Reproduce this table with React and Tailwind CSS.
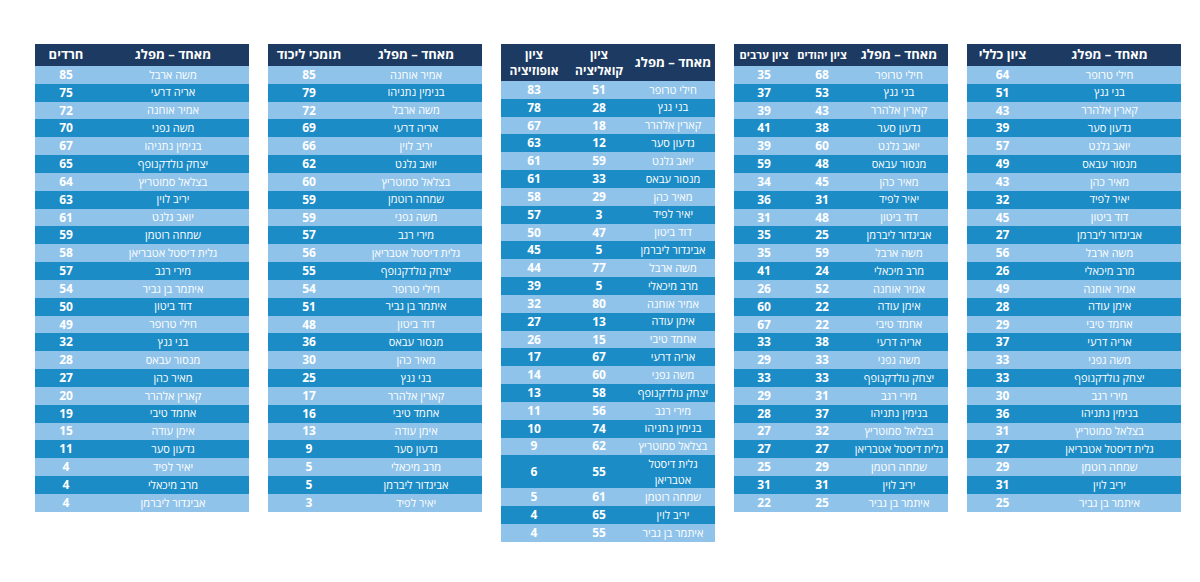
import React from 'react';

const NAME = 'מאחד – מפלג';

const tables = [
  {
    head: 'h-[22px]',
    cols: [
      { label: NAME, w: 'w-[143px]' },
      { label: 'ציון כללי', w: 'w-[71px]' },
    ],
    rows: [
      ['חילי טרופר', 64], ['בני גנץ', 51], ['קארין אלהרר', 43], ['גדעון סער', 39],
      ['יואב גלנט', 57], ['מנסור עבאס', 49], ['מאיר כהן', 43], ['יאיר לפיד', 32],
      ['דוד ביטון', 45], ['אביגדור ליברמן', 27], ['משה ארבל', 56], ['מרב מיכאלי', 26],
      ['אמיר אוחנה', 49], ['אימן עודה', 28], ['אחמד טיבי', 29], ['אריה דרעי', 37],
      ['משה גפני', 33], ['יצחק גולדקנופף', 33], ['מירי רגב', 30], ['בנימין נתניהו', 36],
      ['בצלאל סמוטריץ', 31], ['גלית דיסטל אטבריאן', 27], ['שמחה רוטמן', 29], ['יריב לוין', 31],
      ['איתמר בן גביר', 25],
    ],
  },
  {
    head: 'h-[22px]',
    cols: [
      { label: NAME, w: 'w-[98px]' },
      { label: 'ציון יהודים', w: 'w-[56px]', size: 'text-[11px]' },
      { label: 'ציון ערבים', w: 'w-[60px]', size: 'text-[11px]' },
    ],
    rows: [
      ['חילי טרופר', 68, 35], ['בני גנץ', 53, 37], ['קארין אלהרר', 43, 39], ['גדעון סער', 38, 41],
      ['יואב גלנט', 60, 39], ['מנסור עבאס', 48, 59], ['מאיר כהן', 45, 34], ['יאיר לפיד', 31, 36],
      ['דוד ביטון', 48, 31], ['אביגדור ליברמן', 25, 35], ['משה ארבל', 59, 35], ['מרב מיכאלי', 24, 41],
      ['אמיר אוחנה', 52, 26], ['אימן עודה', 22, 60], ['אחמד טיבי', 22, 67], ['אריה דרעי', 38, 33],
      ['משה גפני', 33, 29], ['יצחק גולדקנופף', 33, 33], ['מירי רגב', 31, 29], ['בנימין נתניהו', 37, 28],
      ['בצלאל סמוטריץ', 32, 27], ['גלית דיסטל אטבריאן', 27, 27], ['שמחה רוטמן', 29, 25], ['יריב לוין', 31, 31],
      ['איתמר בן גביר', 25, 22],
    ],
  },
  {
    head: 'h-[37px]',
    cols: [
      { label: NAME, w: 'w-[84px]' },
      { label: ['ציון', 'קואליציה'], w: 'w-[64px]', size: 'text-[12px]' },
      { label: ['ציון', 'אופוזיציה'], w: 'w-[66px]', size: 'text-[12px]' },
    ],
    rows: [
      ['חילי טרופר', 51, 83], ['בני גנץ', 28, 78], ['קארין אלהרר', 18, 67], ['גדעון סער', 12, 63],
      ['יואב גלנט', 59, 61], ['מנסור עבאס', 33, 61], ['מאיר כהן', 29, 58], ['יאיר לפיד', 3, 57],
      ['דוד ביטון', 47, 50], ['אביגדור ליברמן', 5, 45], ['משה ארבל', 77, 44], ['מרב מיכאלי', 5, 39],
      ['אמיר אוחנה', 80, 32], ['אימן עודה', 13, 27], ['אחמד טיבי', 15, 26], ['אריה דרעי', 67, 17],
      ['משה גפני', 60, 14], ['יצחק גולדקנופף', 58, 13], ['מירי רגב', 56, 11], ['בנימין נתניהו', 74, 10],
      ['בצלאל סמוטריץ', 62, 9], [['גלית דיסטל', 'אטבריאן'], 55, 6], ['שמחה רוטמן', 61, 5], ['יריב לוין', 65, 4],
      ['איתמר בן גביר', 55, 4],
    ],
  },
  {
    head: 'h-[22px]',
    cols: [
      { label: NAME, w: 'w-[132px]' },
      { label: 'תומכי ליכוד', w: 'w-[82px]' },
    ],
    rows: [
      ['אמיר אוחנה', 85], ['בנימין נתניהו', 79], ['משה ארבל', 72], ['אריה דרעי', 69],
      ['יריב לוין', 66], ['יואב גלנט', 62], ['בצלאל סמוטריץ', 60], ['שמחה רוטמן', 59],
      ['משה גפני', 59], ['מירי רגב', 57], ['גלית דיסטל אטבריאן', 56], ['יצחק גולדקנופף', 55],
      ['חילי טרופר', 54], ['איתמר בן גביר', 51], ['דוד ביטון', 48], ['מנסור עבאס', 36],
      ['מאיר כהן', 30], ['בני גנץ', 25], ['קארין אלהרר', 17], ['אחמד טיבי', 16],
      ['אימן עודה', 13], ['גדעון סער', 9], ['מרב מיכאלי', 5], ['אביגדור ליברמן', 5],
      ['יאיר לפיד', 3],
    ],
  },
  {
    head: 'h-[22px]',
    cols: [
      { label: NAME, w: 'w-[152px]' },
      { label: 'חרדים', w: 'w-[62px]' },
    ],
    rows: [
      ['משה ארבל', 85], ['אריה דרעי', 75], ['אמיר אוחנה', 72], ['משה גפני', 70],
      ['בנימין נתניהו', 67], ['יצחק גולדקנופף', 65], ['בצלאל סמוטריץ', 64], ['יריב לוין', 63],
      ['יואב גלנט', 61], ['שמחה רוטמן', 59], ['גלית דיסטל אטבריאן', 58], ['מירי רגב', 57],
      ['איתמר בן גביר', 54], ['דוד ביטון', 50], ['חילי טרופר', 49], ['בני גנץ', 32],
      ['מנסור עבאס', 28], ['מאיר כהן', 27], ['קארין אלהרר', 20], ['אחמד טיבי', 19],
      ['אימן עודה', 15], ['גדעון סער', 11], ['יאיר לפיד', 4], ['מרב מיכאלי', 4],
      ['אביגדור ליברמן', 4],
    ],
  },
];

// two-line cell text
const Lines = ({ v }) =>
  Array.isArray(v) ? (
    <span className="flex flex-col items-center">
      {v.map((l) => (
        <span key={l} className="block leading-[16px]">{l}</span>
      ))}
    </span>
  ) : (
    <span>{v}</span>
  );

const ScoreTable = ({ table }) => (
  <div className="w-[214px] shrink-0">
    <div className={`flex bg-[#1d3a62] text-white font-bold ${table.head}`}>
      {table.cols.map((c, i) => (
        <div
          key={i}
          className={`${c.w} ${c.size || 'text-[13px]'} flex items-center justify-center whitespace-nowrap`}
        >
          <Lines v={c.label} />
        </div>
      ))}
    </div>
    {table.rows.map((row, r) => {
      const tall = Array.isArray(row[0]);
      return (
        <div
          key={r}
          className={`flex text-white ${tall ? 'h-[33px]' : 'h-[17.84px]'} ${
            r % 2 === 0 ? 'bg-[#8fc3ea]' : 'bg-[#1c8cc7]'
          }`}
        >
          {row.map((cell, i) => (
            <div
              key={i}
              className={`${table.cols[i].w} flex items-center justify-center whitespace-nowrap ${
                i === 0 ? 'text-[11px]' : 'text-[12px] font-bold'
              }`}
            >
              <Lines v={cell} />
            </div>
          ))}
        </div>
      );
    })}
  </div>
);

export default function App() {
  return (
    <div
      dir="rtl"
      className="w-[1200px] h-[582px] bg-white pt-[44px] pr-[19px] flex items-start gap-[19px] overflow-hidden"
      style={{ fontFamily: '"Open Sans", "Liberation Sans", "DejaVu Sans", sans-serif' }}
    >
      {tables.map((t, i) => (
        <ScoreTable key={i} table={t} />
      ))}
    </div>
  );
}
